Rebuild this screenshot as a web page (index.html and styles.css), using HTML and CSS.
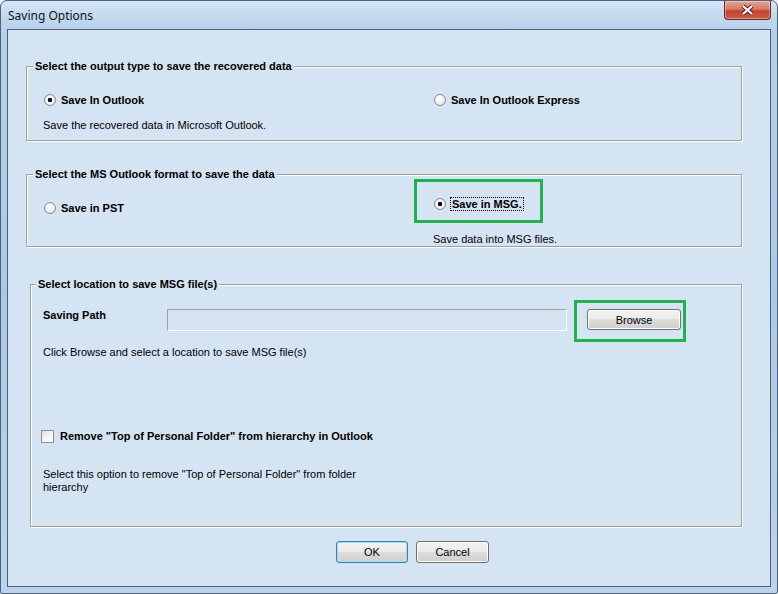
FILE: index.html
```html
<!DOCTYPE html>
<html lang="en">
<head>
  <meta charset="UTF-8">
  <title>Saving Options</title>
  <link rel="stylesheet" href="styles.css">
</head>
<body>

<div class="window">
  <div class="titlebar">
    <span class="title">Saving Options</span>
    <button class="close" title="Close">
      <svg width="15" height="12" viewBox="0 0 15 12">
        <path d="M3 2 L12 10 M12 2 L3 10" stroke="#5a1c14" stroke-width="4.2"/>
        <path d="M3 2 L12 10 M12 2 L3 10" stroke="#fff" stroke-width="2.2"/>
      </svg>
    </button>
  </div>

  <div class="client">
    <fieldset class="group">
      <legend>Select the output type to save the recovered data</legend>
      <div class="cols cols-output">
        <label class="option"><input type="radio" name="type" checked>Save In Outlook</label>
        <label class="option"><input type="radio" name="type">Save In Outlook Express</label>
      </div>
      <p class="hint hint-output">Save the recovered data in Microsoft Outlook.</p>
    </fieldset>

    <fieldset class="group group-format">
      <legend>Select the MS Outlook format to save the data</legend>
      <div class="cols cols-format">
        <label class="option opt-pst"><input type="radio" name="fmt">Save in PST</label>
        <div>
          <div class="mark-box msg-box">
            <label class="option opt-msg"><input type="radio" name="fmt" checked><span class="focus">Save in MSG.</span></label>
          </div>
          <p class="hint msg-hint">Save data into MSG files.</p>
        </div>
      </div>
    </fieldset>

    <fieldset class="group group-location">
      <legend>Select location to save MSG file(s)</legend>
      <div class="path-row">
        <span class="path-label">Saving Path</span>
        <input type="text" class="path-input">
        <div class="mark-box browse-box"><button class="btn btn-browse">Browse</button></div>
      </div>
      <p class="hint hint-browse">Click Browse and select a location to save MSG file(s)</p>
      <label class="option check-row"><input type="checkbox">Remove "Top of Personal Folder" from hierarchy in Outlook</label>
      <p class="hint note">Select this option to remove "Top of Personal Folder" from folder hierarchy</p>
    </fieldset>

    <div class="actions">
      <button class="btn btn-ok">OK</button>
      <button class="btn btn-cancel">Cancel</button>
    </div>
  </div>
</div>

</body>
</html>
```

FILE: styles.css
```css
body { margin: 0; background: #eef2f6; font-family: "Liberation Sans", Arial, sans-serif; font-size: 11px; color: #000; }

/* window frame */
.window { width: 778px; height: 594px; box-sizing: border-box; display: flex; flex-direction: column; padding: 0 6px 6px; border: 1px solid #4f6174; border-radius: 7px 7px 2px 2px; background: linear-gradient(180deg, #d6e7f8 0, #c3d9f0 14px, #b7d0ea 30px, #adc8e6 50%, #bcd3ec 100%); }
.titlebar { height: 28px; display: flex; justify-content: space-between; align-items: flex-start; }
.title { padding: 7px 0 0 1px; font-family: "Noto Sans", "Open Sans", sans-serif; font-size: 12px; line-height: 16px; color: #111; }
.close { width: 47px; height: 19px; padding: 0; display: flex; align-items: center; justify-content: center; border: 1px solid #6d2a22; border-top: none; border-radius: 0 0 4px 4px; background: linear-gradient(180deg, #e8a497 0, #d87867 45%, #c2432f 55%, #cb5c46 100%); box-shadow: inset 0 0 0 1px rgba(255,255,255,.35); }

.client { flex: 1; border: 1px solid #4d5f72; background: #d5e4f2; }

/* group boxes */
.group { margin: 29px 28px 0 18px; padding: 0 0 8px; min-width: 0; border: 1px solid #a0a0a0; box-shadow: 1px 1px 0 #fff, inset 1px 1px 0 #fff; }
.group legend { margin-left: 6px; padding: 0 2px; font-weight: bold; line-height: 14px; background: #d5e4f2; }
.group-format { margin-top: 26px; padding-bottom: 0; }
.group-location { margin: 30px 28px 0 22px; padding-bottom: 32px; }
.group-location legend { margin-left: 5px; }

.cols { display: grid; align-items: start; padding-left: 17px; }
.cols-output { grid-template-columns: 390px auto; margin-top: 20px; }
.cols-format { grid-template-columns: 370px auto; }

.option { display: flex; align-items: center; gap: 5px; font-weight: bold; line-height: 14px; }
.opt-pst { margin-top: 20px; }
.opt-msg { gap: 4px; }
.focus { border: 1px dotted #000; padding: 0 1px; line-height: 12px; }

.hint { margin: 0; line-height: 14px; }
.hint-output { margin-top: 11px; padding-left: 16px; }
.msg-hint { margin-top: 10px; padding-left: 19px; line-height: 13px; }
.hint-browse { margin-top: 3px; padding-left: 12px; }
.note { margin-top: 25px; padding-left: 12px; width: 330px; line-height: 13px; }

/* radio + checkbox */
.option input { appearance: none; margin: 0; flex: none; }
.option input[type=radio] { width: 12px; height: 12px; border-radius: 50%; border: 1px solid #8c8c8c; background: radial-gradient(circle at 40% 40%, #fff 0, #f4f4f4 45%, #d9d9d9 100%); }
.option input[type=radio]:checked { background: radial-gradient(circle, #111 0, #111 2px, #fff 2.6px, #f4f4f4 55%, #d9d9d9 100%); }
.option input[type=checkbox] { width: 13px; height: 13px; border: 1px solid #8f8f8f; background: linear-gradient(135deg, #dcdcdc 0, #f6f6f6 50%, #fff 100%); }
.check-row { margin-top: 70px; padding-left: 10px; gap: 6px; }

/* green highlight marks */
.mark-box { box-sizing: border-box; border: 3px solid #22b14c; }
.msg-box { width: 129px; height: 44px; margin-top: -2px; padding: 15px 0 0 17px; }
.browse-box { width: 112px; height: 42px; margin-left: 7px; padding: 6px 0 0 10px; }

.path-row { display: flex; align-items: flex-start; margin-top: 9px; padding-left: 12px; }
.path-label { width: 124px; flex: none; margin-top: 8px; font-weight: bold; line-height: 14px; }
.path-input { width: 400px; height: 22px; box-sizing: border-box; margin: 9px 0 0; padding: 2px 4px; border: 1px solid; border-color: #a0a0a0 #fff #fff #a0a0a0; box-shadow: inset 1px 1px 0 #e2e2e2; background: #d5e4f2; }

/* buttons */
.btn { height: 22px; padding: 0; font-family: inherit; font-size: 11px; color: #000; border: 1px solid #707070; border-radius: 3px; background: linear-gradient(180deg, #f2f2f2 0, #ebebeb 50%, #dddddd 50%, #cfcfcf 100%); box-shadow: inset 0 0 0 1px #fcfcfc; }
.btn-browse { width: 94px; height: 21px; }
.actions { display: flex; gap: 8px; margin-top: 14px; padding-left: 328px; }
.btn-ok { width: 72px; border-color: #3c7fb1; box-shadow: inset 0 0 0 1px #9fdcf7; }
.btn-cancel { width: 73px; }
```
